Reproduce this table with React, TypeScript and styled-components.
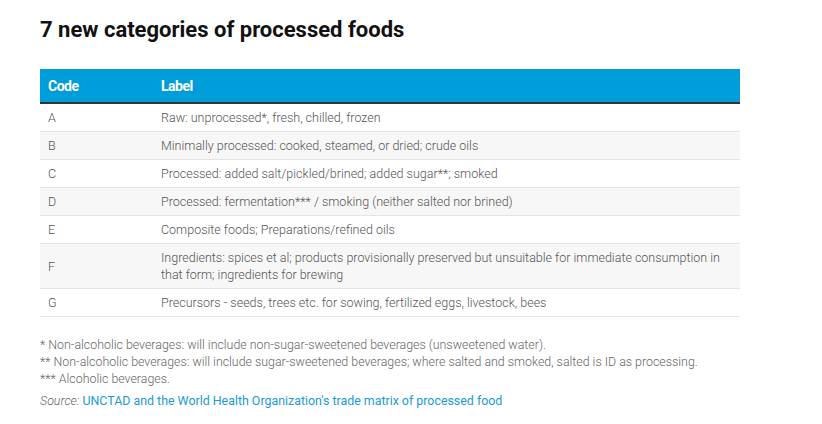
import React from "react";
import styled, { createGlobalStyle } from "styled-components";

const Global = createGlobalStyle`
  html, body { margin: 0; padding: 0; background: #fff; }
  body { font-family: Roboto, "Liberation Sans", sans-serif; }
`;

const Page = styled.div`
  padding: 14px 0 0 40px;
  width: 700px;
`;

const Title = styled.h2`
  margin: 0 0 23px 0;
  font-family: Roboto, sans-serif;
  font-weight: 700;
  font-size: 22px;
  line-height: 32px;
  color: #111;
`;

const Table = styled.table`
  width: 700px;
  border-collapse: collapse;
  font-family: Roboto, sans-serif;
`;

const HeadCell = styled.th<{ $w?: number }>`
  background: #009ddb;
  color: #fff;
  font-weight: 700;
  font-size: 14px;
  letter-spacing: -0.5px;
  text-align: left;
  height: 33px;
  padding: 0 8px;
  border-bottom: 2px solid #333;
  width: ${(p) => (p.$w ? `${p.$w}px` : "auto")};
`;

const Row = styled.tr<{ $alt: boolean }>`
  background: ${(p) => (p.$alt ? "#f7f7f7" : "#fff")};
  border-bottom: 1px solid #e4e4e4;
`;

const Cell = styled.td`
  font-size: 12.5px;
  font-weight: 300;
  color: #555;
  line-height: 17px;
  padding: 5px 8px 5px;
  vertical-align: middle;
`;

const Notes = styled.div`
  margin-top: 19px;
  font-family: Roboto, sans-serif;
  font-size: 12.4px;
  font-weight: 300;
  line-height: 17px;
  color: #666;
`;

const Source = styled.div`
  margin-top: 5px;
  font-size: 12.4px;
  font-weight: 400;
  line-height: 17px;
  color: #1a9ad6;
`;

const SourceLabel = styled.em`
  color: #666;
  font-weight: 300;
`;

const rows: [string, string][] = [
  ["A", "Raw: unprocessed*, fresh, chilled, frozen"],
  ["B", "Minimally processed: cooked, steamed, or dried; crude oils"],
  ["C", "Processed: added salt/pickled/brined; added sugar**; smoked"],
  ["D", "Processed: fermentation*** / smoking (neither salted nor brined)"],
  ["E", "Composite foods; Preparations/refined oils"],
  [
    "F",
    "Ingredients: spices et al; products provisionally preserved but unsuitable for immediate consumption in that form; ingredients for brewing",
  ],
  ["G", "Precursors - seeds, trees etc. for sowing, fertilized eggs, livestock, bees"],
];

export default function App() {
  return (
    <>
      <Global />
      <Page>
        <Title>7 new categories of processed foods</Title>
        <Table>
          <thead>
            <tr>
              <HeadCell $w={97}>Code</HeadCell>
              <HeadCell>Label</HeadCell>
            </tr>
          </thead>
          <tbody>
            {rows.map(([c, l], i) => (
              <Row key={c} $alt={i % 2 === 1}>
                <Cell>{c}</Cell>
                <Cell>{l}</Cell>
              </Row>
            ))}
          </tbody>
        </Table>
        <Notes>
          <div>* Non-alcoholic beverages: will include non-sugar-sweetened beverages (unsweetened water).</div>
          <div>** Non-alcoholic beverages: will include sugar-sweetened beverages; where salted and smoked, salted is ID as processing.</div>
          <div>*** Alcoholic beverages.</div>
        </Notes>
        <Source>
          <SourceLabel>Source:</SourceLabel> UNCTAD and the World Health Organization's trade matrix of processed food
        </Source>
      </Page>
    </>
  );
}
